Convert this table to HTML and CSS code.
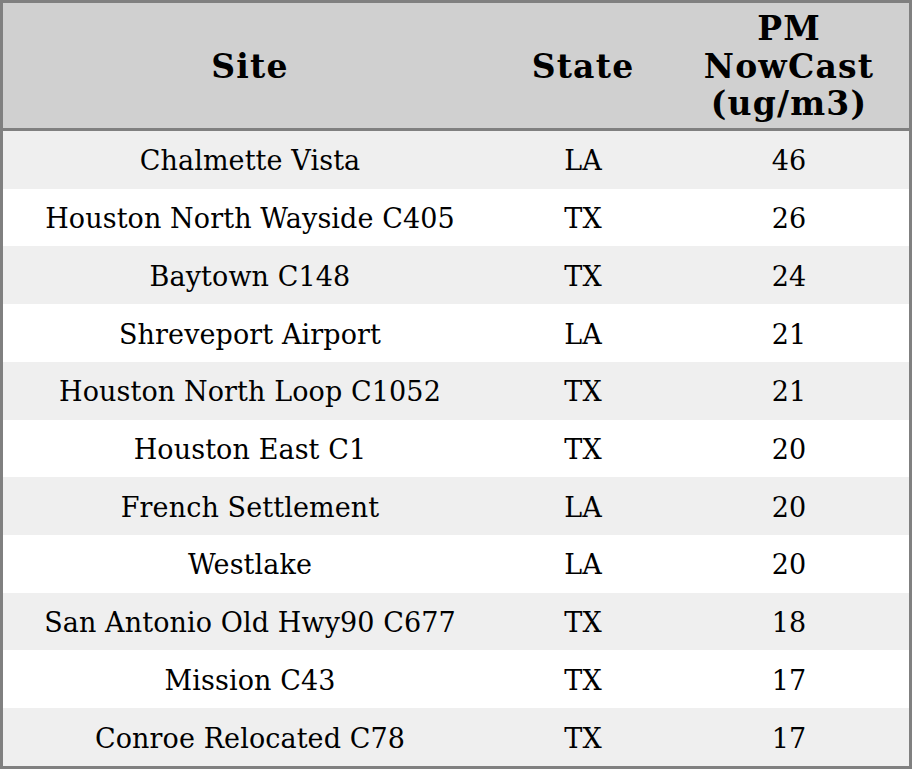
FILE: index.html
```html
<!DOCTYPE html>
<html>
<head>
<meta charset="utf-8">
<link rel="stylesheet" href="styles.css">
</head>
<body>
<table class="aq-table">
  <colgroup>
    <col class="col-site">
    <col class="col-state">
    <col class="col-pm">
  </colgroup>
  <thead>
    <tr class="head-row">
      <th>Site</th>
      <th>State</th>
      <th>PM<br>NowCast<br>(ug/m3)</th>
    </tr>
  </thead>
  <tbody>
    <tr class="odd"><td>Chalmette Vista</td><td>LA</td><td>46</td></tr>
    <tr><td>Houston North Wayside C405</td><td>TX</td><td>26</td></tr>
    <tr class="odd"><td>Baytown C148</td><td>TX</td><td>24</td></tr>
    <tr><td>Shreveport Airport</td><td>LA</td><td>21</td></tr>
    <tr class="odd"><td>Houston North Loop C1052</td><td>TX</td><td>21</td></tr>
    <tr><td>Houston East C1</td><td>TX</td><td>20</td></tr>
    <tr class="odd"><td>French Settlement</td><td>LA</td><td>20</td></tr>
    <tr><td>Westlake</td><td>LA</td><td>20</td></tr>
    <tr class="odd"><td>San Antonio Old Hwy90 C677</td><td>TX</td><td>18</td></tr>
    <tr><td>Mission C43</td><td>TX</td><td>17</td></tr>
    <tr class="odd"><td>Conroe Relocated C78</td><td>TX</td><td>17</td></tr>
  </tbody>
</table>
</body>
</html>
```
FILE: styles.css
```css
html, body {
  margin: 0;
  padding: 0;
  background: #ffffff;
}

.aq-table {
  width: 912px;
  height: 769px;
  border: 3px solid #808080;
  border-spacing: 0;
  border-collapse: separate;
  table-layout: fixed;
  font-family: "DejaVu Serif", serif;
  color: #000000;
}

.col-site { width: 494px; }
.col-state { width: 172px; }
.col-pm { width: 240px; }

.head-row {
  height: 128px;
}

.head-row th {
  background: #d0d0d0;
  border-bottom: 3px solid #808080;
  font-size: 33px;
  font-weight: bold;
  letter-spacing: 1.2px;
  line-height: 37.5px;
  text-align: center;
  vertical-align: middle;
  padding: 2px 0 0 0;
}

tbody td {
  font-size: 27px;
  letter-spacing: 0.1px;
  text-align: center;
  vertical-align: middle;
  padding: 2px 0 0 0;
  background: #ffffff;
}

tbody tr.odd td {
  background: #efefef;
}
```
